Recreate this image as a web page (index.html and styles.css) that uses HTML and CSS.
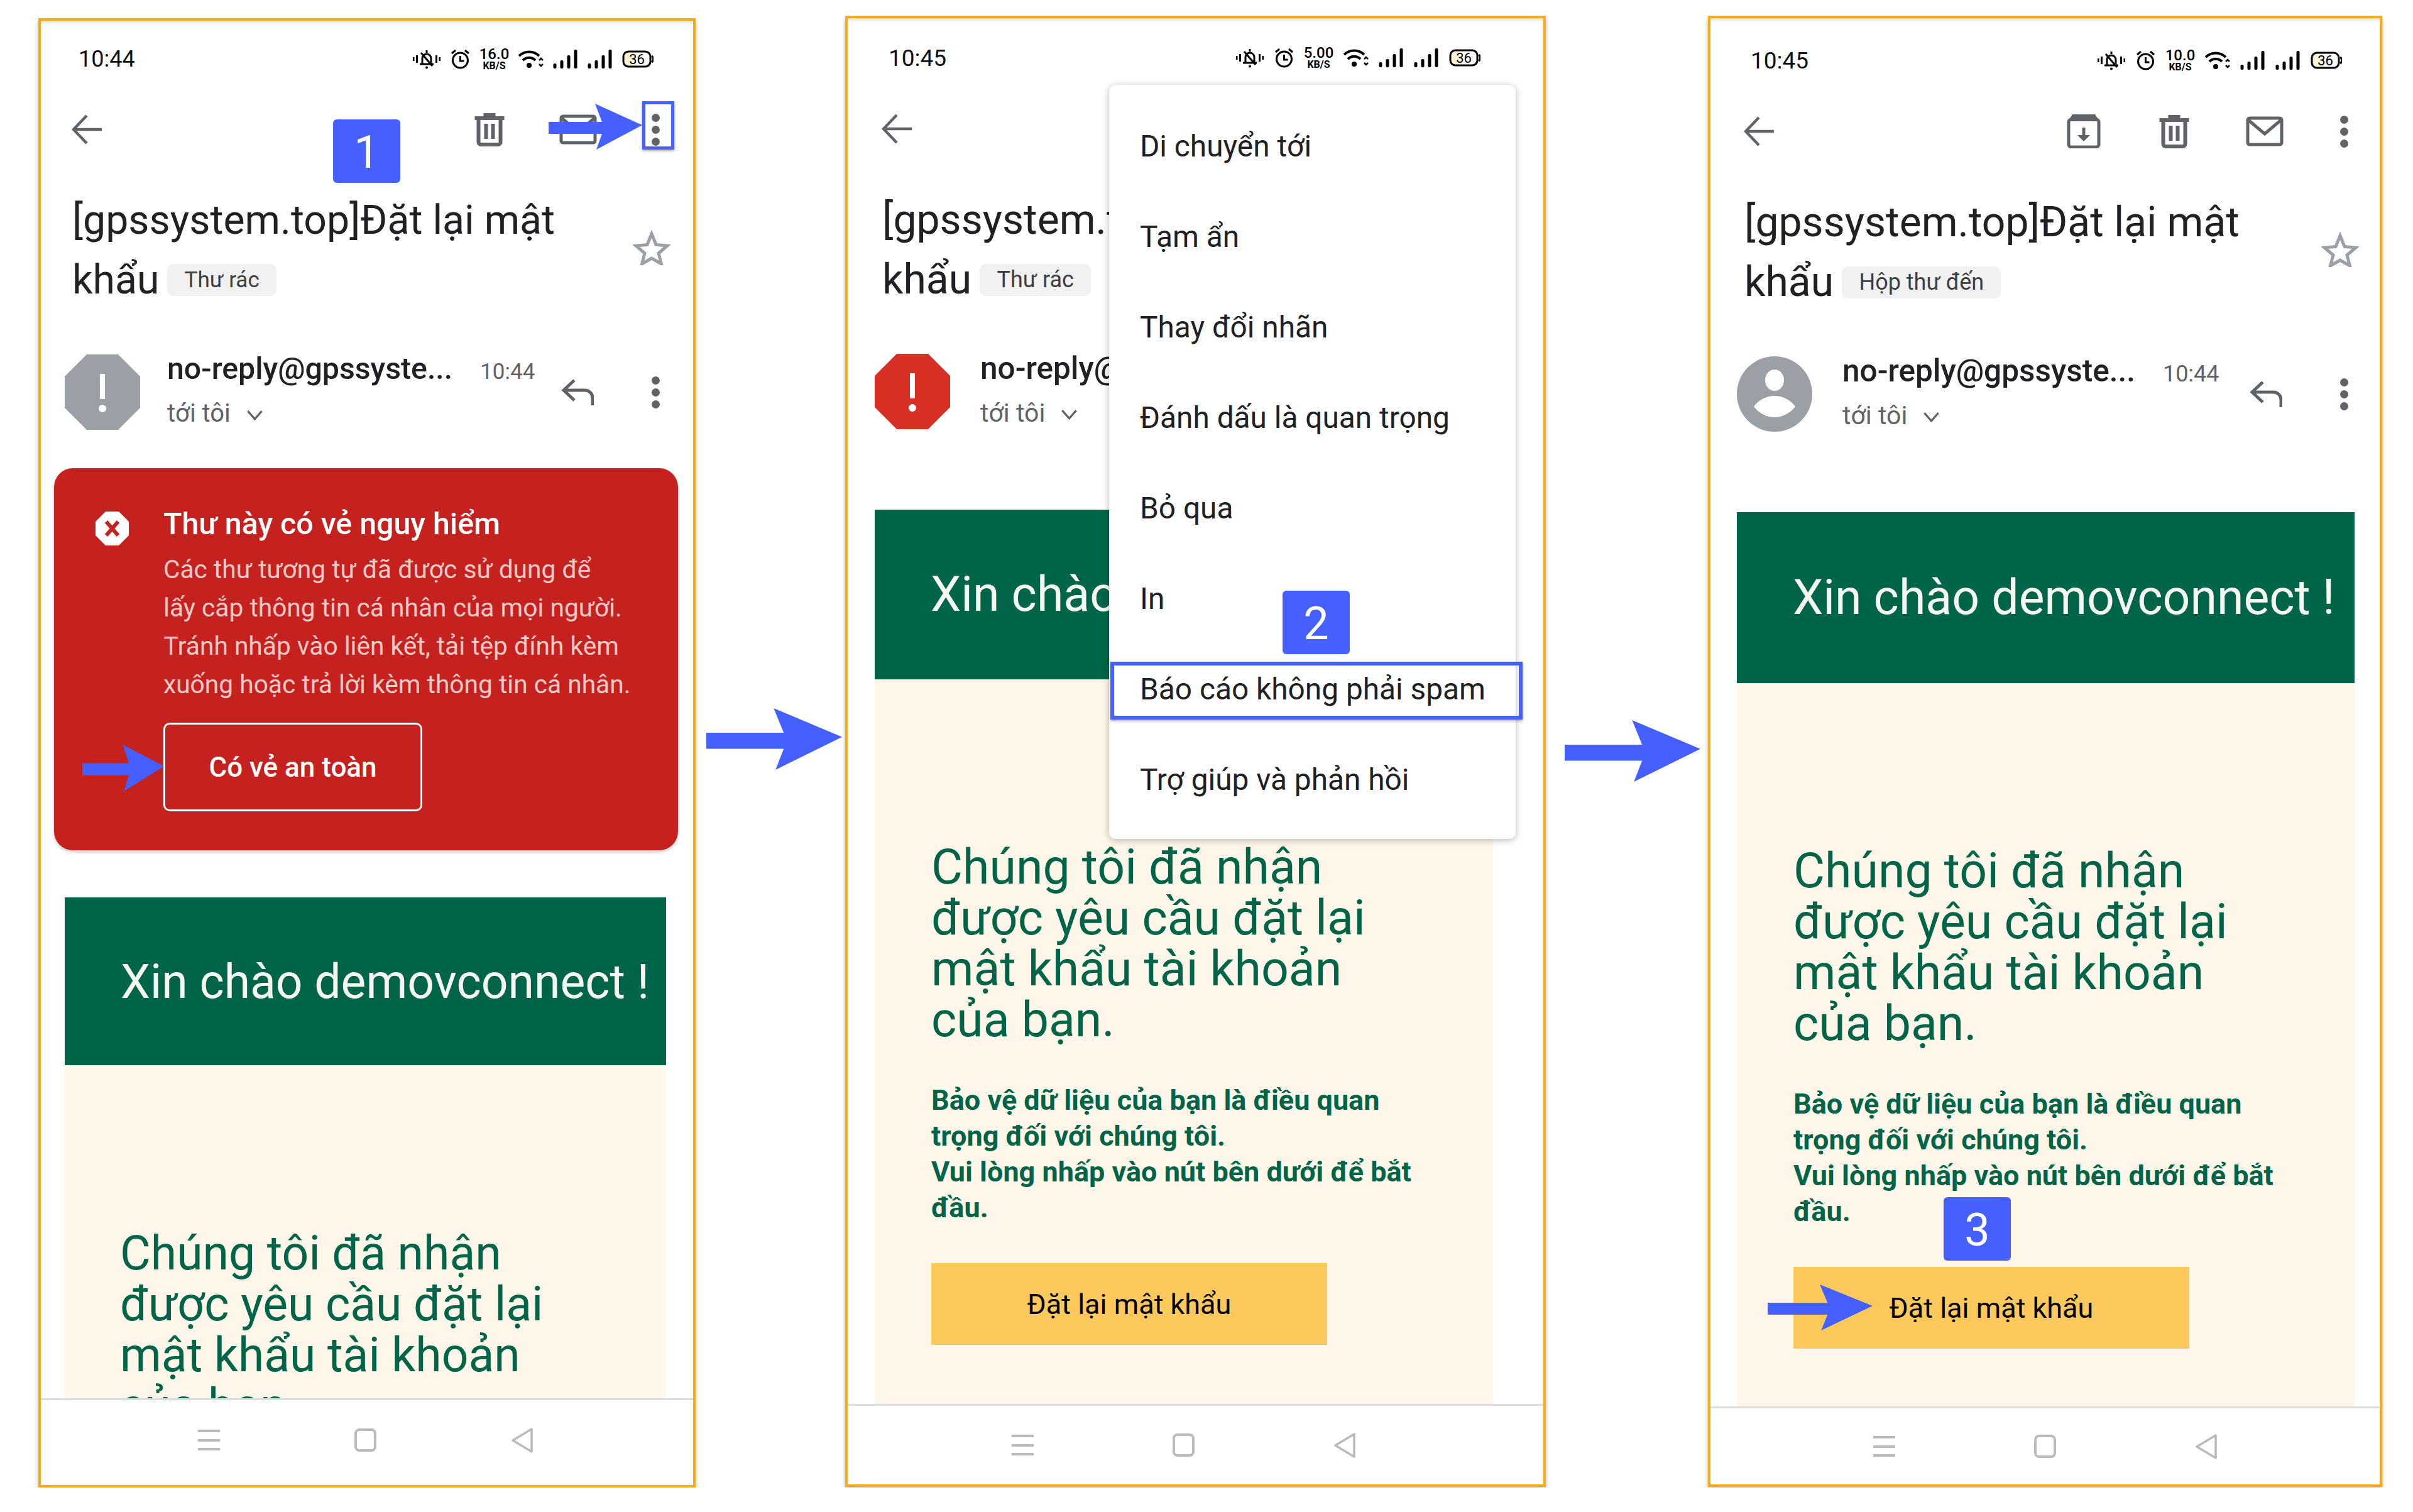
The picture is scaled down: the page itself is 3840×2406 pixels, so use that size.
FILE: index.html
```html
<!DOCTYPE html>
<html lang="vi">
<head>
    <meta charset="UTF-8">
    <title>Báo cáo không phải spam</title>
    <link rel="stylesheet" href="styles.css">
</head>
<body>
    <svg class="icon-defs" aria-hidden="true">
        <symbol id="i-bell" viewBox="0 0 44 32">
            <path d="M0 13h2.5v6H0zM5 10h3v12H5zM36 10h3v12h-3zM41.500 13H44v6h-2.500z"/>
            <path d="M15 24V15a7 7 0 0 1 14 0v9M11 24h22M13 6l18 21M22 2v4" fill="none" stroke="#000" stroke-width="3"/>
            <circle cx="22" cy="29.500" r="2"/>
        </symbol>
        <symbol id="i-alarm" viewBox="0 0 31 32">
            <circle cx="15.500" cy="18" r="12" fill="none" stroke="#000" stroke-width="3"/>
            <path d="M15.500 11v8h6M2 7l6-5M29 7l-6-5" fill="none" stroke="#000" stroke-width="3"/>
        </symbol>
        <symbol id="i-wifi" viewBox="0 0 40 30">
            <path d="M1 10a23 23 0 0 1 32 0M7 17a14 14 0 0 1 20 0" fill="none" stroke="#000" stroke-width="4"/>
            <circle cx="17" cy="25" r="4"/>
            <path d="M33 17l3-3 3 3M33 23l3 3 3-3" fill="none" stroke="#000" stroke-width="2.500"/>
        </symbol>
        <symbol id="i-signal" viewBox="0 0 39 30">
            <rect x="0" y="22" width="5" height="8" rx="2"/>
            <rect x="11" y="17" width="5" height="13" rx="2"/>
            <rect x="22" y="9" width="5" height="21" rx="2"/>
            <rect x="33" y="0" width="5" height="30" rx="2"/>
        </symbol>
        <symbol id="i-battery" viewBox="0 0 50 28">
            <path d="M9 2h12v24H9a7 7 0 0 1-7-7V9a7 7 0 0 1 7-7z" fill="#fdf1d6"/>
            <rect x="2" y="2" width="43" height="24" rx="8" fill="none" stroke="#000" stroke-width="3"/>
            <path d="M47 9a6 6 0 0 1 0 10" fill="none" stroke="#000" stroke-width="3"/>
            <text x="23.500" y="21.500" text-anchor="middle" class="battery-text">36</text>
        </symbol>
        <symbol id="i-back" viewBox="0 0 48 46">
            <path d="M48 23H4M24 1L3 23l21 22" fill="none" stroke="currentColor" stroke-width="4.500"/>
        </symbol>
        <symbol id="i-archive" viewBox="0 0 54 54">
            <rect x="3" y="8" width="48" height="44" rx="4" fill="none" stroke="currentColor" stroke-width="5"/>
            <path d="M9 0h36l7 11H2z" fill="currentColor"/>
            <path d="M24.500 21h5v12H37L27 43 17 33h7.500z" fill="currentColor"/>
        </symbol>
        <symbol id="i-trash" viewBox="0 0 47 54">
            <path d="M0 6h14V1h19v5h14v6H0z" fill="currentColor"/>
            <path d="M6 11v36a4 4 0 0 0 4 4h27a4 4 0 0 0 4-4V11" fill="none" stroke="currentColor" stroke-width="6"/>
            <path d="M15 18h6v24h-6zM26 18h6v24h-6z" fill="currentColor"/>
        </symbol>
        <symbol id="i-mail" viewBox="0 0 60 48">
            <rect x="3" y="3" width="54" height="42" rx="3" fill="none" stroke="currentColor" stroke-width="5"/>
            <path d="M4 6l26 22L56 6" fill="none" stroke="currentColor" stroke-width="5"/>
        </symbol>
        <symbol id="i-star" viewBox="0 0 60 56">
            <path d="M30 6l7 17.500 18 1.500-14 12 4.500 17L30 45l-15.500 9L19 37 5 25l18-1.500z" fill="none" stroke="currentColor" stroke-width="5"/>
        </symbol>
        <symbol id="i-reply" viewBox="0 0 52 42">
            <path d="M21 2L4 18l17 16M4 18h34a12 12 0 0 1 12 12v12" fill="none" stroke="currentColor" stroke-width="5"/>
        </symbol>
        <symbol id="i-chevron" viewBox="0 0 25 16">
            <path d="M2 2l10.500 12L23 2" fill="none" stroke="currentColor" stroke-width="3"/>
        </symbol>
        <symbol id="i-octagon" viewBox="0 0 120 120">
            <path d="M35 0h50l35 35v50l-35 35H35L0 85V35z" fill="currentColor"/>
            <path d="M56 31h8v40h-8z" fill="#fff"/>
            <circle cx="60" cy="86" r="6" fill="#fff"/>
        </symbol>
        <symbol id="i-person" viewBox="0 0 120 120">
            <circle cx="60" cy="60" r="60" fill="currentColor"/>
            <ellipse cx="60" cy="38" rx="15" ry="17" fill="#fff"/>
            <path d="M27 80c8-11 20-17 33-17s25 6 33 17c-8 10-20 17-33 17S35 90 27 80z" fill="#fff"/>
        </symbol>
        <symbol id="i-danger" viewBox="0 0 53 54">
            <path d="M16 0h21l16 16v22L37 54H16L0 38V16z" fill="#fff"/>
            <path d="M17 16l19 22M36 16L17 38" fill="none" stroke="#c5221f" stroke-width="6"/>
        </symbol>
        <symbol id="i-arrow" viewBox="0 0 149 73" preserveAspectRatio="none">
            <path d="M0 29h85L74 0l75 34-73 39 9-25H0z" fill="#4660ff"/>
        </symbol>
    </svg>

    <main class="board">
        <!-- buoc 1: thu nam trong spam -->
        <section class="phone phone-spam">
            <div class="screen">
                <div class="statusbar">
                    <span class="clock">10:44</span>
                    <div class="status-icons">
                        <svg class="st-bell"><use href="#i-bell"/></svg>
                        <svg class="st-alarm"><use href="#i-alarm"/></svg>
                        <span class="speed"><b>16.0</b><i>KB/S</i></span>
                        <svg class="st-wifi"><use href="#i-wifi"/></svg>
                        <svg class="st-signal"><use href="#i-signal"/></svg>
                        <svg class="st-signal"><use href="#i-signal"/></svg>
                        <svg class="st-battery"><use href="#i-battery"/></svg>
                    </div>
                </div>
                <div class="toolbar">
                    <svg class="ic-back"><use href="#i-back"/></svg>
                    <div class="toolbar-actions">
                        <svg class="ic-trash"><use href="#i-trash"/></svg>
                        <svg class="ic-mail"><use href="#i-mail"/></svg>
                        <span class="dots"><i></i><i></i><i></i></span>
                    </div>
                </div>
                <div class="subject">
                    <h1>[gpssystem.top]Đặt lại mật<br>khẩu <span class="chip">Thư rác</span></h1>
                    <svg class="ic-star"><use href="#i-star"/></svg>
                </div>
                <div class="sender">
                    <svg class="avatar avatar-grey"><use href="#i-octagon"/></svg>
                    <div class="sender-info">
                        <div class="sender-top"><span class="sender-name">no-reply@gpssyste...</span><span class="sender-time">10:44</span></div>
                        <div class="sender-to">tới tôi <svg class="ic-chevron"><use href="#i-chevron"/></svg></div>
                    </div>
                    <svg class="ic-reply"><use href="#i-reply"/></svg>
                    <span class="dots"><i></i><i></i><i></i></span>
                </div>
                <div class="warning">
                    <svg class="warning-icon"><use href="#i-danger"/></svg>
                    <div class="warning-body">
                        <h2>Thư này có vẻ nguy hiểm</h2>
                        <p>Các thư tương tự đã được sử dụng để<br>lấy cắp thông tin cá nhân của mọi người.<br>Tránh nhấp vào liên kết, tải tệp đính kèm<br>xuống hoặc trả lời kèm thông tin cá nhân.</p>
                        <div class="safe-btn">Có vẻ an toàn</div>
                    </div>
                </div>
                <div class="mail mail-after-warning">
                    <div class="mail-hello">Xin chào demovconnect !</div>
                    <div class="mail-body">
                        <h3>Chúng tôi đã nhận<br>được yêu cầu đặt lại<br>mật khẩu tài khoản<br>của bạn.</h3>
                    </div>
                </div>
            </div>
            <div class="navbar">
                <span class="nav-menu"><i></i><i></i><i></i></span>
                <span class="nav-home"></span>
                <svg class="nav-back" viewBox="0 0 36 40"><path d="M33 2v36L3 20z" fill="none" stroke="#bbb" stroke-width="3.500" stroke-linejoin="round"/></svg>
            </div>
            <span class="step step-1">1</span>
            <svg class="pointer pointer-dots"><use href="#i-arrow"/></svg>
            <span class="mark mark-dots"></span>
            <svg class="pointer pointer-safe"><use href="#i-arrow"/></svg>
        </section>

        <div class="connector connector-1"><svg><use href="#i-arrow"/></svg></div>

        <!-- buoc 2: menu ba cham -->
        <section class="phone phone-menu">
            <div class="screen">
                <div class="statusbar">
                    <span class="clock">10:45</span>
                    <div class="status-icons">
                        <svg class="st-bell"><use href="#i-bell"/></svg>
                        <svg class="st-alarm"><use href="#i-alarm"/></svg>
                        <span class="speed"><b>5.00</b><i>KB/S</i></span>
                        <svg class="st-wifi"><use href="#i-wifi"/></svg>
                        <svg class="st-signal"><use href="#i-signal"/></svg>
                        <svg class="st-signal"><use href="#i-signal"/></svg>
                        <svg class="st-battery"><use href="#i-battery"/></svg>
                    </div>
                </div>
                <div class="toolbar">
                    <svg class="ic-back"><use href="#i-back"/></svg>
                </div>
                <div class="subject">
                    <h1>[gpssystem.top]Đặt lại mật<br>khẩu <span class="chip">Thư rác</span></h1>
                </div>
                <div class="sender">
                    <svg class="avatar avatar-red"><use href="#i-octagon"/></svg>
                    <div class="sender-info">
                        <div class="sender-top"><span class="sender-name">no-reply@gpssyste...</span></div>
                        <div class="sender-to">tới tôi <svg class="ic-chevron"><use href="#i-chevron"/></svg></div>
                    </div>
                </div>
                <div class="mail">
                    <div class="mail-hello">Xin chào demovconnect !</div>
                    <div class="mail-body">
                        <h3>Chúng tôi đã nhận<br>được yêu cầu đặt lại<br>mật khẩu tài khoản<br>của bạn.</h3>
                        <p>Bảo vệ dữ liệu của bạn là điều quan<br>trọng đối với chúng tôi.<br>Vui lòng nhấp vào nút bên dưới để bắt<br>đầu.</p>
                        <div class="reset-btn">Đặt lại mật khẩu</div>
                    </div>
                </div>
            </div>
            <div class="navbar">
                <span class="nav-menu"><i></i><i></i><i></i></span>
                <span class="nav-home"></span>
                <svg class="nav-back" viewBox="0 0 36 40"><path d="M33 2v36L3 20z" fill="none" stroke="#bbb" stroke-width="3.500" stroke-linejoin="round"/></svg>
            </div>
            <ul class="menu">
                <li>Di chuyển tới</li>
                <li>Tạm ẩn</li>
                <li>Thay đổi nhãn</li>
                <li>Đánh dấu là quan trọng</li>
                <li>Bỏ qua</li>
                <li>In</li>
                <li>Báo cáo không phải spam</li>
                <li>Trợ giúp và phản hồi</li>
            </ul>
            <span class="mark mark-item"></span>
            <span class="step step-2">2</span>
        </section>

        <div class="connector connector-2"><svg><use href="#i-arrow"/></svg></div>

        <!-- buoc 3: thu da ve hop thu den -->
        <section class="phone phone-inbox">
            <div class="screen">
                <div class="statusbar">
                    <span class="clock">10:45</span>
                    <div class="status-icons">
                        <svg class="st-bell"><use href="#i-bell"/></svg>
                        <svg class="st-alarm"><use href="#i-alarm"/></svg>
                        <span class="speed"><b>10.0</b><i>KB/S</i></span>
                        <svg class="st-wifi"><use href="#i-wifi"/></svg>
                        <svg class="st-signal"><use href="#i-signal"/></svg>
                        <svg class="st-signal"><use href="#i-signal"/></svg>
                        <svg class="st-battery"><use href="#i-battery"/></svg>
                    </div>
                </div>
                <div class="toolbar">
                    <svg class="ic-back"><use href="#i-back"/></svg>
                    <div class="toolbar-actions">
                        <svg class="ic-archive"><use href="#i-archive"/></svg>
                        <svg class="ic-trash"><use href="#i-trash"/></svg>
                        <svg class="ic-mail"><use href="#i-mail"/></svg>
                        <span class="dots"><i></i><i></i><i></i></span>
                    </div>
                </div>
                <div class="subject">
                    <h1>[gpssystem.top]Đặt lại mật<br>khẩu <span class="chip">Hộp thư đến</span></h1>
                    <svg class="ic-star"><use href="#i-star"/></svg>
                </div>
                <div class="sender">
                    <svg class="avatar avatar-grey"><use href="#i-person"/></svg>
                    <div class="sender-info">
                        <div class="sender-top"><span class="sender-name">no-reply@gpssyste...</span><span class="sender-time">10:44</span></div>
                        <div class="sender-to">tới tôi <svg class="ic-chevron"><use href="#i-chevron"/></svg></div>
                    </div>
                    <svg class="ic-reply"><use href="#i-reply"/></svg>
                    <span class="dots"><i></i><i></i><i></i></span>
                </div>
                <div class="mail">
                    <div class="mail-hello">Xin chào demovconnect !</div>
                    <div class="mail-body">
                        <h3>Chúng tôi đã nhận<br>được yêu cầu đặt lại<br>mật khẩu tài khoản<br>của bạn.</h3>
                        <p>Bảo vệ dữ liệu của bạn là điều quan<br>trọng đối với chúng tôi.<br>Vui lòng nhấp vào nút bên dưới để bắt<br>đầu.</p>
                        <div class="reset-btn">Đặt lại mật khẩu</div>
                    </div>
                </div>
            </div>
            <div class="navbar">
                <span class="nav-menu"><i></i><i></i><i></i></span>
                <span class="nav-home"></span>
                <svg class="nav-back" viewBox="0 0 36 40"><path d="M33 2v36L3 20z" fill="none" stroke="#bbb" stroke-width="3.500" stroke-linejoin="round"/></svg>
            </div>
            <span class="step step-3">3</span>
            <svg class="pointer pointer-reset"><use href="#i-arrow"/></svg>
        </section>
    </main>
</body>
</html>
```
FILE: styles.css
```css
* {
    box-sizing: border-box;
}

body {
    margin: 0;
    background: #fff;
    font-family: Roboto, "Liberation Sans", sans-serif;
    color: #202124;
}

.icon-defs {
    position: absolute;
    width: 0;
    height: 0;
}

.battery-text {
    font-family: Roboto, sans-serif;
    font-size: 22px;
}

.board {
    display: flex;
    align-items: flex-start;
    padding-left: 61px;
}

.connector {
    flex: none;
}

.connector svg {
    display: block;
    width: 216px;
    height: 98px;
}

.connector-1 {
    width: 238px;
    margin-top: 1127px;
    padding-left: 17px;
}

.connector-2 {
    width: 258px;
    margin-top: 1146px;
    padding-left: 30px;
}

/* phone frame */
.phone {
    --k: 1;
    --action-gap: 84px;
    position: relative;
    flex: none;
    display: flex;
    flex-direction: column;
    margin-top: 25px;
    height: 2341px;
    border: 4px solid #f9ab14;
    background: #fff;
    box-shadow: 0 5px 6px rgba(0, 0, 0, 0.3), inset 0 7px 6px -5px rgba(0, 0, 0, 0.18);
}

.phone-spam {
    --k: 0.975;
    --action-gap: 81px;
    margin-top: 29px;
    height: 2338px;
    width: 1046px;
}

.phone-menu {
    width: 1115px;
}

.phone-inbox {
    width: 1073px;
}

.screen {
    flex: 1;
    min-height: 0;
    overflow: hidden;
}

.phone-spam .screen {
    padding: 0 43px 0 38px;
}

.phone-menu .screen {
    padding: 0 80px 0 43px;
}

.phone-inbox .screen {
    padding: 0 40px 0 42px;
}

/* status bar */
.statusbar {
    display: flex;
    align-items: center;
    justify-content: space-between;
    padding: 0 20px 0 22px;
    height: 134px;
}

.phone-spam .statusbar {
    height: 127px;
    padding-bottom: 5px;
}

.phone-menu .statusbar {
    height: 130px;
    padding-bottom: 4px;
}

.clock {
    font-size: calc(37px * var(--k));
    color: #111;
}

.status-icons {
    display: flex;
    align-items: center;
    gap: 16px;
}

.phone-spam .status-icons {
    gap: 15px;
}

.st-bell {
    width: 46px;
    height: 32px;
}

.st-alarm {
    width: 31px;
    height: 32px;
}

.st-wifi {
    width: 40px;
    height: 30px;
}

.st-signal {
    width: 40px;
    height: 30px;
}

.st-battery {
    width: 50px;
    height: 28px;
}

.speed {
    display: flex;
    flex-direction: column;
    align-items: center;
    width: 47px;
    color: #000;
}

.speed b {
    font-size: 24px;
    font-weight: 500;
    line-height: 20px;
}

.speed i {
    font-size: 16px;
    font-style: normal;
    font-weight: 700;
    line-height: 17px;
}

/* toolbar */
.toolbar {
    display: flex;
    align-items: center;
    justify-content: space-between;
    height: 92px;
    padding: 0 5px 0 11px;
}

.toolbar-actions {
    display: flex;
    align-items: center;
    gap: var(--action-gap);
}

.toolbar-actions svg {
    width: 60px;
    height: 54px;
}

.ic-back {
    width: 48px;
    height: 46px;
    color: #5f6368;
}

.ic-archive,
.ic-trash,
.ic-mail,
.ic-reply {
    color: #5f6368;
}

.dots {
    display: flex;
    flex: none;
    flex-direction: column;
    align-items: center;
    gap: 6px;
    width: 24px;
}

.dots i {
    width: 13px;
    height: 13px;
    border-radius: 50%;
    background: #5f6368;
}

/* subject */
.subject {
    display: flex;
    align-items: center;
    justify-content: space-between;
    margin-top: 51px;
    padding-left: 12px;
    height: 190px;
}

.subject h1 {
    margin: 0;
    font-size: calc(66px * var(--k));
    font-weight: 400;
    line-height: 95px;
    white-space: nowrap;
    color: #202124;
}

.chip {
    display: inline-block;
    margin-left: -3px;
    padding: 0 27px;
    height: 51px;
    border-radius: 10px;
    background: #f1f1f1;
    font-size: calc(36px * var(--k));
    line-height: 51px;
    color: #3c4043;
    vertical-align: 10px;
}

.ic-star {
    flex: none;
    width: 60px;
    height: 56px;
    margin: 0 -7px 8px 0;
    color: #9aa0a6;
}

/* sender row */
.sender {
    display: flex;
    align-items: center;
    margin-top: 71px;
    padding-right: 5px;
    height: 120px;
}

.avatar {
    flex: none;
    width: 120px;
    height: 120px;
}

.avatar-grey {
    color: #9aa0a6;
}

.avatar-red {
    color: #d93025;
}

.sender-info {
    flex: 1;
    min-width: 0;
    padding-left: 48px;
    white-space: nowrap;
}

.phone-spam .sender-info {
    padding-left: 43px;
}

.sender-top {
    display: flex;
    align-items: baseline;
    gap: 44px;
    height: 68px;
    line-height: 44px;
}

.sender-name {
    font-size: calc(49.500px * var(--k));
    font-weight: 500;
}

.sender-time {
    font-size: calc(36px * var(--k));
    color: #5f6368;
}

.sender-to {
    display: flex;
    align-items: center;
    gap: 25px;
    font-size: calc(41px * var(--k));
    line-height: 50px;
    color: #5f6368;
}

.ic-chevron {
    width: 27px;
    height: 17px;
    margin-top: 4px;
    color: #5f6368;
}

.ic-reply {
    flex: none;
    width: 52px;
    height: 42px;
    margin-right: 86px;
}

/* red warning */
.warning {
    display: flex;
    align-items: flex-start;
    gap: 55px;
    margin: 61px -19px 0 -17px;
    padding: 58px 20px 61px 66px;
    height: 608px;
    border-radius: 30px;
    background: #c5221f;
    color: #fff;
    box-shadow: 0 3px 5px rgba(0, 0, 0, 0.2);
}

.warning-icon {
    flex: none;
    width: 53px;
    height: 54px;
    margin-top: 11px;
}

.warning h2 {
    margin: 0;
    font-size: 48.300px;
    font-weight: 500;
    line-height: 61px;
}

.warning p {
    margin: 12px 0 0;
    font-size: 40.700px;
    line-height: 61px;
    white-space: nowrap;
    color: #f3c9c7;
}

.safe-btn {
    display: flex;
    align-items: center;
    justify-content: center;
    margin-top: 30px;
    width: 412px;
    height: 141px;
    border: 3px solid #fff;
    border-radius: 10px;
    font-size: 44px;
    font-weight: 500;
}

/* mail content */
.mail {
    margin-top: 128px;
    height: 1600px;
    background: #fef6e9;
}

.mail-after-warning {
    margin-top: 75px;
}

.mail-hello {
    display: flex;
    align-items: center;
    padding-left: 89px;
    height: 270px;
    background: #006548;
    font-size: calc(77px * var(--k));
    font-weight: 400;
    white-space: nowrap;
    color: #f7f7f2;
}

.phone-spam .mail-hello {
    height: 267px;
}

.phone-inbox .mail-hello {
    height: 272px;
}

.mail-body {
    padding: 259px 0 0 90px;
    color: #006548;
}

.phone-spam .mail-body {
    padding-left: 88px;
}

.mail-body h3 {
    margin: 0;
    font-size: calc(77px * var(--k));
    font-weight: 400;
    line-height: 81px;
}

.mail-body p {
    margin: 58px 0 0;
    font-size: 45px;
    font-weight: 700;
    line-height: 57px;
    white-space: nowrap;
}

.reset-btn {
    display: flex;
    align-items: center;
    justify-content: center;
    margin-top: 60px;
    width: 630px;
    height: 130px;
    background: #fdc95c;
    font-size: 45px;
    color: #000;
}

/* bottom navigation */
.navbar {
    flex: none;
    display: flex;
    align-items: center;
    justify-content: center;
    gap: 221px;
    height: 124px;
    border-top: 3px solid #ddd;
}

.phone-spam .navbar {
    height: 138px;
    padding: 0 4px 8px 0;
    gap: 214px;
}

.phone-menu .navbar {
    height: 128px;
    padding-right: 38px;
}

.nav-menu {
    display: flex;
    flex-direction: column;
    justify-content: space-between;
    width: 35px;
    height: 33px;
}

.nav-menu i {
    height: 4px;
    background: #bbb;
}

.nav-home {
    width: 35px;
    height: 37px;
    border: 4px solid #bbb;
    border-radius: 8px;
}

.nav-back {
    width: 36px;
    height: 40px;
}

/* overflow menu */
.menu {
    position: absolute;
    left: 416px;
    top: 106px;
    width: 647px;
    height: 1200px;
    margin: 0;
    padding: 26px 0 0;
    list-style: none;
    border-radius: 10px;
    background: #fff;
    box-shadow: 0 2px 12px rgba(0, 0, 0, 0.28);
}

.menu li {
    height: 144px;
    padding-left: 49px;
    font-size: 47.800px;
    line-height: 144px;
    color: #202124;
}

/* tutorial overlays */
.step {
    position: absolute;
    display: flex;
    align-items: center;
    justify-content: center;
    width: 107px;
    height: 101px;
    padding-top: 3px;
    border-radius: 6px;
    background: #4660ff;
    font-size: 72px;
    color: #fff;
}

.step-1 {
    left: 465px;
    top: 157px;
}

.step-2 {
    left: 692px;
    top: 911px;
}

.step-3 {
    left: 371px;
    top: 1876px;
}

.mark {
    position: absolute;
    border: 5px solid #4660ff;
    box-shadow: 0 2px 4px rgba(0, 0, 0, 0.35);
}

.mark-dots {
    left: 957px;
    top: 128px;
    width: 51px;
    height: 77px;
}

.mark-item {
    left: 418px;
    top: 1024px;
    width: 656px;
    height: 92px;
    border-width: 6px;
}

.pointer {
    position: absolute;
}

.pointer-dots {
    left: 808px;
    top: 132px;
    width: 149px;
    height: 73px;
}

.pointer-safe {
    left: 66px;
    top: 1152px;
    width: 130px;
    height: 74px;
}

.pointer-reset {
    left: 91px;
    top: 2015px;
    width: 167px;
    height: 73px;
}
```
